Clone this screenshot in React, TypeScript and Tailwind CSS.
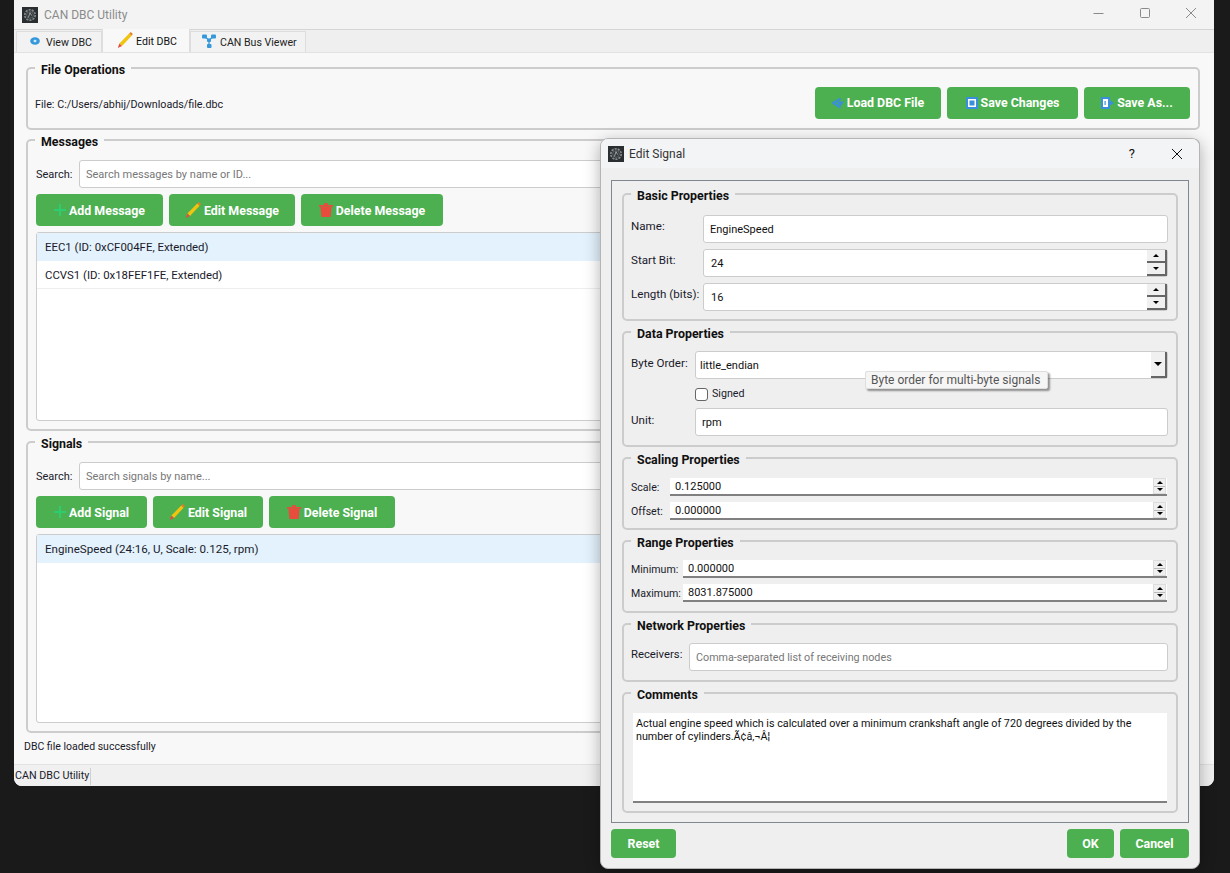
import React from "react";

const FONT = "font-['Roboto','Open_Sans',sans-serif]";

function Logo({ className }: { className: string }) {
  return (
    <svg viewBox="0 0 16 16" className={className}>
      <rect width="16" height="16" fill="#2a2e31" />
      <circle cx="8" cy="8" r="5.2" fill="none" stroke="#83888a" strokeWidth="1.7" strokeDasharray="2.2 1" />
      <circle cx="8" cy="8" r="3.4" fill="#33383b" stroke="#6f7477" strokeWidth="0.7" />
      <path d="M6.4 10.6L8 5.6l1.6 3" fill="none" stroke="#a5a9ab" strokeWidth="0.9" />
    </svg>
  );
}

function Pencil({ className }: { className: string }) {
  return (
    <svg viewBox="0 0 16 16" className={className}>
      <path d="M12.2 1.6l2.4 2.2L5 14l-2.6-2.4z" fill="#f1c40f" />
      <path d="M12.2 1.6L13.8 0l2 2-1.2 1.8z" fill="#e67e22" />
      <path d="M2.4 11.6L5 14l-4.2 2z" fill="#e74c3c" />
    </svg>
  );
}

function Plus() {
  return (
    <svg viewBox="0 0 12 12" className="w-3 h-3 shrink-0">
      <path d="M5 0h2v5h5v2H7v5H5V7H0V5h5z" fill="#2ecc71" />
    </svg>
  );
}

function Trash() {
  return (
    <svg viewBox="0 0 14 14" className="w-[14px] h-[14px] shrink-0">
      <path d="M0 2h14v1.8H0zM5 .2h4V2H5z" fill="#e74c3c" />
      <path d="M1.4 3.8h11.2L11.6 14H2.4z" fill="#e74c3c" />
    </svg>
  );
}

function LoadIcon() {
  return (
    <svg viewBox="0 0 12 12" className="w-3 h-3 shrink-0">
      <path d="M8.6 1.6L1.4 6l7 4.6" fill="none" stroke="#3a8fdc" strokeWidth="2.2" />
      <path d="M4.4 4.6H12L8.4 9.4z" fill="#3a8fdc" />
    </svg>
  );
}

function SaveIcon() {
  return (
    <svg viewBox="0 0 12 12" className="w-3 h-3 shrink-0">
      <rect width="12" height="12" fill="#3a8fdc" />
      <rect x="2" y="2" width="8" height="8" fill="#fff" />
      <rect x="3.5" y="3.5" width="5" height="5" fill="#3a8fdc" />
    </svg>
  );
}

function SaveAsIcon() {
  return (
    <svg viewBox="0 0 13 12" className="w-[13px] h-3 shrink-0">
      <rect width="9" height="12" fill="#3a8fdc" />
      <rect x="2" y="2" width="5" height="8" fill="#fff" />
      <rect x="3.5" y="4" width="1.2" height="4" fill="#3a8fdc" />
      <path d="M9 3.5L13 6 9 8.5z" fill="#3a8fdc" />
    </svg>
  );
}

function Group({ title, bg, className, children }: { title: string; bg: string; className: string; children: React.ReactNode }) {
  return (
    <div className={`relative shrink-0 border-2 border-[#cccccc] rounded-[5px] ${className}`}>
      <div className={`absolute -top-[6px] left-[7px] px-[6px] h-[14px] leading-[14px] text-[12.4px] font-bold text-[#111] ${bg}`}>{title}</div>
      {children}
    </div>
  );
}

function GreenButton({ w, icon, label }: { w: string; icon?: React.ReactNode; label: string }) {
  return (
    <div className={`${w} h-8 rounded-[4px] bg-[#4caf50] flex items-center justify-center gap-[3px] text-white text-[12.4px] font-bold`}>
      {icon}
      <span className="pt-[2px]">{label}</span>
    </div>
  );
}

function SearchRow({ placeholder }: { placeholder: string }) {
  return (
    <div className="flex items-center">
      <span className="w-[43px] pt-[3px] text-[11px] text-[#1a1a2a]">Search:</span>
      <div className="flex-1 h-[28px] bg-white border border-[#cccccc] rounded-[3px] pl-[6px] pt-[3px] flex items-center text-[11px] text-[#777]">{placeholder}</div>
    </div>
  );
}

function Field({ value, className, placeholder }: { value?: string; className: string; placeholder?: string }) {
  return (
    <div className={`bg-white border border-[#cccccc] rounded-[3px] flex items-center ${placeholder ? "text-[#777] text-[10.75px]" : "text-[#111] text-[11px]"} ${className}`}>
      {value ?? placeholder}
    </div>
  );
}

function BigSpin({ value }: { value: string }) {
  return (
    <div className="flex-1 h-[28px] bg-white border border-[#cccccc] rounded-[3px] flex items-center pl-[7px] pt-[2px] text-[11px] text-[#111] relative">
      {value}
      <div className="absolute right-0 top-0 flex flex-col w-[20px] h-[26px]">
        <div className="flex-1 bg-[#f0f0f0] border-r-2 border-b-2 border-[#666] flex items-center justify-center">
          <span className="border-x-[3px] border-x-transparent border-b-[3px] border-b-black" />
        </div>
        <div className="flex-1 bg-[#f0f0f0] border-r-2 border-b-2 border-[#666] flex items-center justify-center">
          <span className="border-x-[3px] border-x-transparent border-t-[3px] border-t-black" />
        </div>
      </div>
    </div>
  );
}

function SmallSpin({ value }: { value: string }) {
  return (
    <div className="flex-1 h-[18px] bg-white border-b-2 border-[#808080] flex items-center pl-[5px] pt-[3px] text-[11px] text-[#111] relative">
      {value}
      <div className="absolute right-[1px] top-0 flex flex-col w-[13px] h-[16px] bg-[#efefef] border border-[#dddddd]">
        <div className="flex-1 flex items-center justify-center border-b border-[#bbbbbb]">
          <span className="border-x-[3px] border-x-transparent border-b-[3px] border-b-black" />
        </div>
        <div className="flex-1 flex items-center justify-center">
          <span className="border-x-[3px] border-x-transparent border-t-[3px] border-t-black" />
        </div>
      </div>
    </div>
  );
}

function SpinRow({ label, value, labelW }: { label: string; value: string; labelW: string }) {
  return (
    <div className="flex items-center">
      <span className={`${labelW} pt-[1px] text-[10.6px] text-[#1a1a2a] whitespace-nowrap`}>{label}</span>
      <SmallSpin value={value} />
    </div>
  );
}

function MainWindow() {
  return (
    <div className="w-[1200px] h-[786px] ml-[14px] bg-[#f8f8f8] rounded-b-[8px] flex flex-col overflow-hidden">
      <div className="h-[30px] shrink-0 bg-[#f3f3f3] border-b border-[#d4d4d4] flex items-center pl-[8px]">
        <Logo className="w-4 h-4" />
        <span className="ml-[6px] text-[12px] text-[#8b8b8b]">CAN DBC Utility</span>
        <div className="ml-auto flex items-center">
          <svg viewBox="0 0 46 30" className="w-[46px] h-[30px]"><path d="M17.5 13.5h10" stroke="#8a8a8a" /></svg>
          <svg viewBox="0 0 46 30" className="w-[46px] h-[30px]"><rect x="18.5" y="8.5" width="9" height="9" rx="1" fill="none" stroke="#8a8a8a" /></svg>
          <svg viewBox="0 0 46 30" className="w-[46px] h-[30px]"><path d="M18 8l10 10M28 8l-10 10" stroke="#8a8a8a" /></svg>
        </div>
      </div>
      <div className="h-[23px] shrink-0 bg-[#efefef] border-b border-[#e2e2e2] flex items-end pl-[2px] text-[10.6px] text-[#222] whitespace-nowrap">
        <div className="w-[86px] h-[21px] border border-b-0 border-[#dddddd] bg-[#f2f2f2] flex items-center pl-[13px] pt-[2px] gap-[6px]">
          <svg viewBox="0 0 10 8" className="w-[10px] h-[8px] -mt-[4px]"><ellipse cx="5" cy="4" rx="4.8" ry="3.8" fill="#3498db" /><path d="M3.5 4h3M5 2.7v2.6" stroke="#fff" strokeWidth="1.1" /></svg>
          View DBC
        </div>
        <div className="w-[88px] h-[23px] bg-[#f8f8f8] border-x border-[#dddddd] flex items-center pl-[14px] pt-[2px] gap-[3px] text-[#111]">
          <Pencil className="w-4 h-4 -mt-[4px]" />
          Edit DBC
        </div>
        <div className="w-[116px] h-[21px] border border-b-0 border-[#dddddd] bg-[#f2f2f2] flex items-center pl-[11px] pt-[2px] gap-[4px]">
          <svg viewBox="0 0 14 14" className="w-[14px] h-[14px] -mt-[4px]">
            <path d="M3 3l4 3 4-3M7 6v5" stroke="#3498db" strokeWidth="1.3" fill="none" />
            <rect x="0" y="0.5" width="5" height="4" rx="1" fill="#3498db" />
            <rect x="9" y="0.5" width="5" height="4" rx="1" fill="#3498db" />
            <rect x="5" y="4.5" width="4" height="3.5" rx="1" fill="#3498db" />
            <rect x="5" y="10" width="4.5" height="4" rx="1" fill="#3498db" />
          </svg>
          CAN Bus Viewer
        </div>
      </div>
      <div className="flex-1 flex flex-col pl-[12px] pr-[14px] pt-[14px]">
        <Group title="File Operations" bg="bg-[#f8f8f8]" className="h-[63px] pl-[8px] pr-[8px] pt-[8px] flex items-center">
          <span className="text-[10.75px] pt-[6px] -ml-[1px] text-[#1a1a2a]">File: C:/Users/abhij/Downloads/file.dbc</span>
          <div className="ml-auto flex gap-[6px]">
            <GreenButton w="w-[126px]" icon={<LoadIcon />} label="Load DBC File" />
            <GreenButton w="w-[131px]" icon={<SaveIcon />} label="Save Changes" />
            <GreenButton w="w-[106px]" icon={<SaveAsIcon />} label="Save As..." />
          </div>
        </Group>
        <Group title="Messages" bg="bg-[#f8f8f8]" className="h-[292px] mt-[9px] px-[8px] pt-[19px]">
          <SearchRow placeholder="Search messages by name or ID..." />
          <div className="flex gap-[6px] mt-[6px]">
            <GreenButton w="w-[127px]" icon={<Plus />} label="Add Message" />
            <GreenButton w="w-[126px]" icon={<Pencil className="w-4 h-4" />} label="Edit Message" />
            <GreenButton w="w-[142px]" icon={<Trash />} label="Delete Message" />
          </div>
          <div className="h-[189px] mt-[6px] bg-white border border-[#cccccc] rounded-[3px] text-[11.4px] text-[#1a1a2a]">
            <div className="h-[28px] bg-[#e3f2fd] flex items-center pl-[8px] pt-[2px]">EEC1 (ID: 0xCF004FE, Extended)</div>
            <div className="h-[28px] border-b border-[#eeeeee] flex items-center pl-[8px] pt-[2px]">CCVS1 (ID: 0x18FEF1FE, Extended)</div>
          </div>
        </Group>
        <Group title="Signals" bg="bg-[#f8f8f8]" className="h-[292px] mt-[10px] px-[8px] pt-[19px]">
          <SearchRow placeholder="Search signals by name..." />
          <div className="flex gap-[6px] mt-[6px]">
            <GreenButton w="w-[111px]" icon={<Plus />} label="Add Signal" />
            <GreenButton w="w-[110px]" icon={<Pencil className="w-4 h-4" />} label="Edit Signal" />
            <GreenButton w="w-[126px]" icon={<Trash />} label="Delete Signal" />
          </div>
          <div className="h-[189px] mt-[6px] bg-white border border-[#cccccc] rounded-[3px] text-[11.6px] text-[#1a1a2a]">
            <div className="h-[28px] bg-[#e3f2fd] flex items-center pl-[8px] pt-[2px]">EngineSpeed (24:16, U, Scale: 0.125, rpm)</div>
          </div>
        </Group>
        <div className="h-[28px] flex items-center -ml-[2px] text-[10.5px] text-[#1a1a2a]">DBC file loaded successfully</div>
      </div>
      <div className="h-[22px] shrink-0 bg-[#f0f0f0] border-t border-[#e2e2e2] flex items-center pl-[1px] pt-[2px] text-[10.7px] text-[#1a1a2a]">
        <span className="pr-[1px] border-r border-[#d0d0d0]">CAN DBC Utility</span>
      </div>
    </div>
  );
}

function EditSignalDialog() {
  return (
    <div className="absolute left-[600px] top-[138px] w-[600px] h-[731px] bg-[#efefef] border border-[#b5b5b5] rounded-[8px] shadow-[0_4px_16px_rgba(0,0,0,0.3)] flex flex-col overflow-hidden">
      <div className="h-[29px] shrink-0 bg-[#f3f4f6] flex items-center pl-[7px]">
        <Logo className="w-4 h-4" />
        <span className="ml-[5px] text-[12px] text-[#333]">Edit Signal</span>
        <span className="ml-auto mr-[36px] text-[13px] text-[#111]">?</span>
        <svg viewBox="0 0 12 12" className="w-3 h-3 mr-[16px]"><path d="M1 1l10 10M11 1L1 11" stroke="#111" /></svg>
      </div>
      <div className="mx-[10px] mt-[12px] h-[643px] shrink-0 border border-[#7f8790] px-[10px] pt-[12px] flex flex-col">
        <Group title="Basic Properties" bg="bg-[#efefef]" className="h-[128px] pl-[7px] pr-[8px] pt-[20px] flex flex-col gap-[6px]">
          <div className="flex items-center">
            <span className="w-[72px] text-[11.6px] text-[#1a1a2a] -mt-[4px]">Name:</span>
            <Field value="EngineSpeed" className="flex-1 h-[28px] pl-[6px] pt-[2px]" />
          </div>
          <div className="flex items-center">
            <span className="w-[72px] text-[11.6px] text-[#1a1a2a] -mt-[4px]">Start Bit:</span>
            <BigSpin value="24" />
          </div>
          <div className="flex items-center">
            <span className="w-[72px] text-[11.6px] text-[#1a1a2a] -mt-[4px]">Length (bits):</span>
            <BigSpin value="16" />
          </div>
        </Group>
        <Group title="Data Properties" bg="bg-[#efefef]" className="h-[116px] mt-[10px] pl-[7px] pr-[8px] pt-[18px]">
          <div className="flex items-center">
            <span className="w-[64px] text-[11.6px] text-[#1a1a2a] -mt-[2px]">Byte Order:</span>
            <div className="flex-1 h-[28px] bg-white border border-[#cccccc] rounded-[3px] flex items-center pl-[4px] pt-[2px] text-[11px] text-[#111] relative">
              little_endian
              <div className="absolute right-0 top-0 w-[16px] h-[26px] bg-[#f0f0f0] border-r-2 border-b-2 border-[#666] flex items-center justify-center">
                <span className="border-x-[4px] border-x-transparent border-t-[4px] border-t-black" />
              </div>
            </div>
          </div>
          <div className="ml-[64px] mt-[9px] h-[13px] flex items-center gap-[4px] text-[10.7px] text-[#1a1a2a]">
            <span className="w-[13px] h-[13px] bg-white border border-[#666] rounded-[3px]" />
            Signed
          </div>
          <div className="flex items-center mt-[7px]">
            <span className="w-[64px] text-[11.6px] text-[#1a1a2a] -mt-[2px]">Unit:</span>
            <Field value="rpm" className="flex-1 h-[28px] pl-[6px] pt-[2px]" />
          </div>
          <div className="absolute left-[241px] top-[38px] w-[183px] h-[18px] bg-[#f5f5f5] border border-[#dddddd] rounded-[2px] shadow-[2px_2px_2px_rgba(0,0,0,0.4)] flex items-center pl-[5px] text-[12px] text-[#555]">
            Byte order for multi-byte signals
          </div>
        </Group>
        <Group title="Scaling Properties" bg="bg-[#efefef]" className="h-[73px] mt-[10px] pl-[7px] pr-[9px] pt-[19px] flex flex-col gap-[6px]">
          <SpinRow label="Scale:" value="0.125000" labelW="w-[39px]" />
          <SpinRow label="Offset:" value="0.000000" labelW="w-[39px]" />
        </Group>
        <Group title="Range Properties" bg="bg-[#efefef]" className="h-[73px] mt-[10px] pl-[7px] pr-[9px] pt-[18px] flex flex-col gap-[6px]">
          <SpinRow label="Minimum:" value="0.000000" labelW="w-[52px]" />
          <SpinRow label="Maximum:" value="8031.875000" labelW="w-[52px]" />
        </Group>
        <Group title="Network Properties" bg="bg-[#efefef]" className="h-[59px] mt-[10px] pl-[7px] pr-[8px] pt-[18px]">
          <div className="flex items-center">
            <span className="w-[58px] text-[11.3px] text-[#1a1a2a] -mt-[4px]">Receivers:</span>
            <Field placeholder="Comma-separated list of receiving nodes" className="flex-1 h-[28px] pl-[6px] pt-[2px]" />
          </div>
        </Group>
        <Group title="Comments" bg="bg-[#efefef]" className="h-[121px] mt-[10px] pl-[9px] pr-[9px] pt-[19px]">
          <div className="h-[90px] bg-white border-b-2 border-[#808080] px-[3px] pt-[4px] text-[10.75px] leading-[13px] text-[#111]">
            Actual engine speed which is calculated over a minimum crankshaft angle of 720 degrees divided by the number of cylinders.Ã¢â‚¬Â¦
          </div>
        </Group>
      </div>
      <div className="mx-[10px] mt-[6px] flex text-white text-[12.4px] font-bold">
        <div className="w-[65px] h-[29px] rounded-[4px] bg-[#4caf50] flex items-center justify-center pt-[1px]">Reset</div>
        <div className="ml-auto w-[47px] h-[29px] rounded-[4px] bg-[#4caf50] flex items-center justify-center pt-[1px]">OK</div>
        <div className="ml-[6px] w-[69px] h-[29px] rounded-[4px] bg-[#4caf50] flex items-center justify-center pt-[1px]">Cancel</div>
      </div>
    </div>
  );
}

export default function App() {
  return (
    <div className={`relative w-[1230px] h-[873px] bg-[#1a1a1a] overflow-hidden ${FONT}`}>
      <MainWindow />
      <EditSignalDialog />
    </div>
  );
}
